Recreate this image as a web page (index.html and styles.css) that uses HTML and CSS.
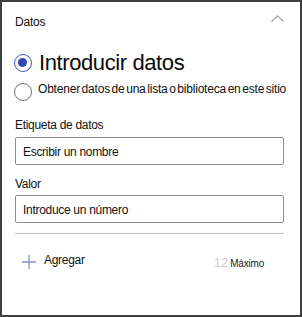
FILE: index.html
```html
<!DOCTYPE html>
<html>
<head>
  <meta charset="UTF-8">
  <title>Datos</title>
  <link rel="stylesheet" href="styles.css">
</head>
<body>

  <div class="panel">
    <div class="panel-head">
      <span class="panel-title">Datos</span>
      <svg class="chevron" width="13" height="7" viewBox="0 0 13 7">
        <path d="M0.5 6.5 L6.5 0.8 L12.5 6.5" fill="none" stroke="#a3a3a3" stroke-width="1.2"/>
      </svg>
    </div>

    <label class="choice choice-big">
      <span class="radio checked"></span>
      <span class="choice-text">Introducir datos</span>
    </label>
    <label class="choice choice-small">
      <span class="radio"></span>
      <span class="choice-text">Obtener datos de una lista o biblioteca en este sitio</span>
    </label>

    <div class="field-label first">Etiqueta de datos</div>
    <div class="field">Escribir un nombre</div>

    <div class="field-label">Valor</div>
    <div class="field">Introduce un número</div>

    <hr class="divider">

    <div class="footer">
      <svg class="plus" width="14" height="14" viewBox="0 0 14 14">
        <path d="M7 0 V14 M0 7 H14" stroke="#8c90c9" stroke-width="1.3"/>
      </svg>
      <span class="add-text">Agregar</span>
      <span class="limit">
        <span class="limit-num">12</span>
        <span class="limit-text">Máximo</span>
      </span>
    </div>
  </div>

</body>
</html>
```

FILE: styles.css
```css
body {
  margin: 0;
  background: #fff;
  font-family: "Liberation Sans", Arial, sans-serif;
  color: #111;
}
.panel {
  width: 302px;
  height: 317px;
  box-sizing: border-box;
  border: 2px solid #3f3f3f;
  padding: 12px 16px 0 13px;
}
.panel-head {
  display: flex;
  justify-content: space-between;
  align-items: flex-start;
  height: 16px;
}
.panel-title {
  font-size: 12px;
  line-height: 16px;
  letter-spacing: -0.2px;
}
.chevron {
  margin-top: 1px;
}
.choice {
  display: flex;
  gap: 7px;
}
.choice-big {
  margin-top: 20px;
  align-items: center;
}
.choice-big .choice-text {
  font-size: 22px;
  line-height: 26px;
  letter-spacing: -0.4px;
  color: #0a0a0a;
}
.choice-small {
  margin-top: 5px;
  align-items: flex-start;
}
.choice-small .radio {
  margin-top: 2px;
}
.choice-small .choice-text {
  font-size: 12px;
  line-height: 16px;
  letter-spacing: -0.2px;
  word-spacing: -1.5px;
  margin-left: -1px;
  white-space: nowrap;
}
.radio {
  width: 18px;
  height: 18px;
  box-sizing: border-box;
  border: 1.5px solid #6f6f6f;
  border-radius: 50%;
  margin-left: -1px;
  flex: none;
  position: relative;
}
.radio.checked {
  border-color: #4658c2;
}
.radio.checked::after {
  content: "";
  position: absolute;
  left: 3px;
  top: 3px;
  width: 9px;
  height: 9px;
  border-radius: 50%;
  background: #3447b6;
}
.field-label {
  font-size: 12px;
  line-height: 16px;
  letter-spacing: -0.3px;
  margin-top: 11px;
}
.field-label.first {
  margin-top: 16px;
}
.field {
  margin-top: 3px;
  height: 28px;
  box-sizing: border-box;
  border: 1px solid #8e8e8e;
  border-radius: 2px;
  padding: 6px 7px 0;
  font-size: 12px;
  line-height: 16px;
  letter-spacing: -0.3px;
}
.field-label.first + .field {
  margin-top: 4px;
}
.divider {
  margin: 10px 0 0;
  border: none;
  border-top: 1px solid #bcbcbc;
}
.footer {
  display: flex;
  align-items: flex-start;
  margin-top: 18px;
}
.plus {
  margin: 3px 8px 0 7px;
}
.add-text {
  font-size: 12px;
  line-height: 16px;
  letter-spacing: -0.3px;
}
.limit {
  margin-left: auto;
  margin-right: 20px;
  margin-top: 3px;
  display: flex;
  align-items: baseline;
  gap: 2px;
}
.limit-num {
  font-size: 13px;
  line-height: 16px;
  color: #cfcfcf;
}
.limit-text {
  font-size: 10px;
  line-height: 16px;
  letter-spacing: -0.2px;
  color: #222;
}
```
